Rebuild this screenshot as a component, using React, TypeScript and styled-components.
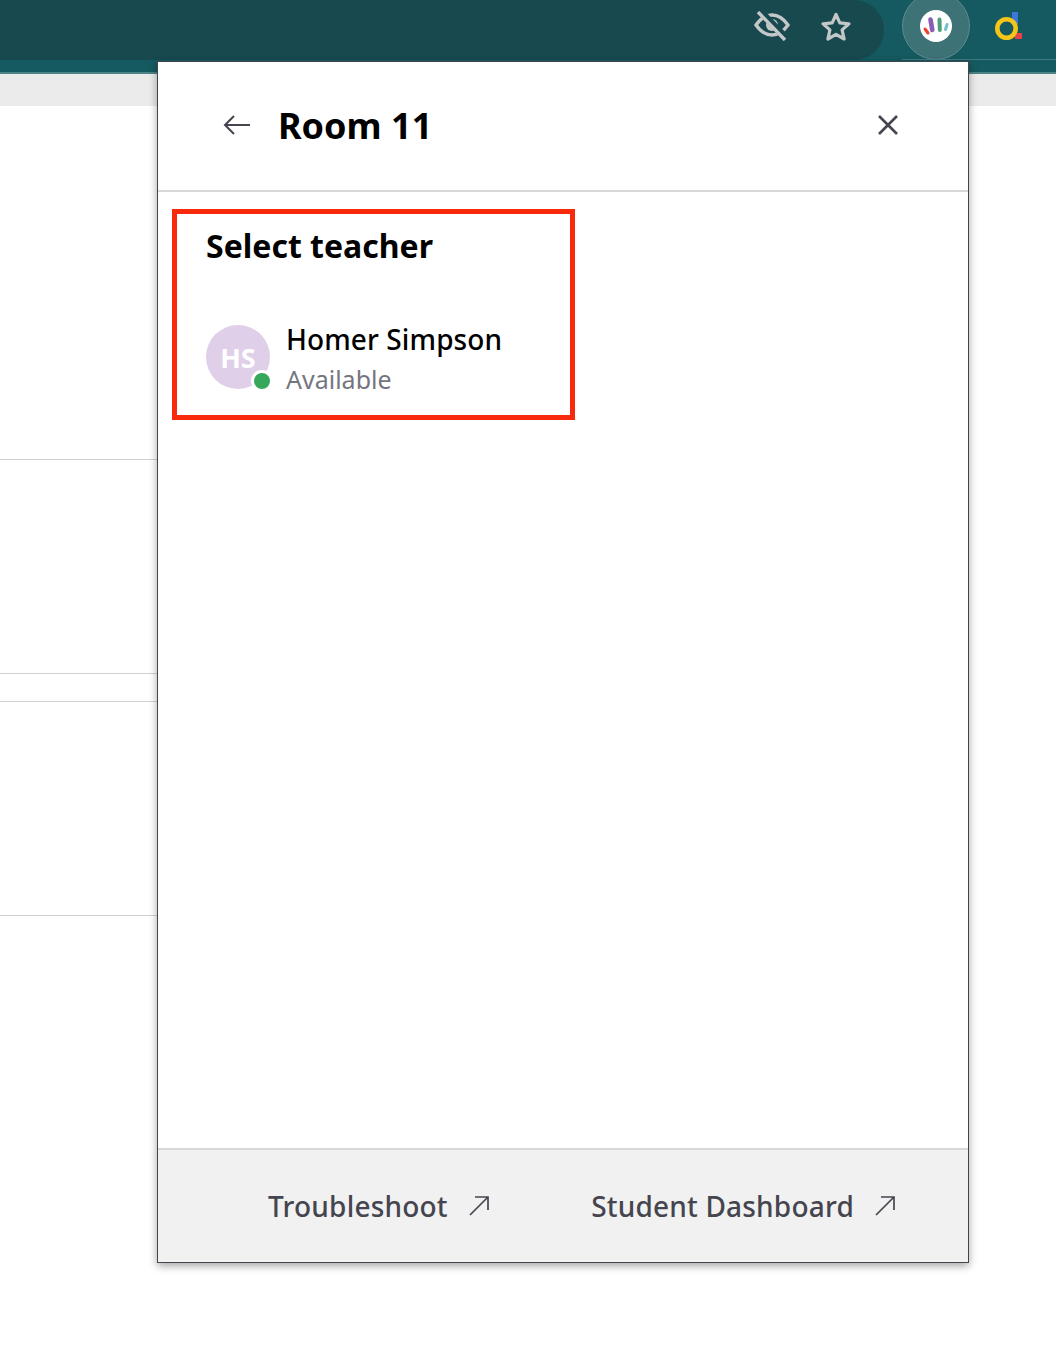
import React from "react";
import styled, { createGlobalStyle } from "styled-components";

const Global = createGlobalStyle`
  html, body { margin: 0; padding: 0; background: #fff; }
  body { font-family: "Noto Sans", "Open Sans", sans-serif; }
`;

const Page = styled.div`
  position: relative;
  width: 1056px;
  height: 1352px;
  overflow: hidden;
  background: #fff;
`;

const Toolbar = styled.header`
  position: relative;
  display: flex;
  justify-content: space-between;
  height: 72px;
  background: #155a60;
  border-bottom: 2px solid #4d8287;
`;

const Omnibox = styled.div`
  display: flex;
  justify-content: flex-end;
  align-items: center;
  gap: 31px;
  width: 884px;
  height: 60px;
  box-sizing: border-box;
  padding: 0 33px 8px 0;
  background: #17494f;
  border-radius: 0 30px 30px 0;
`;

const Extensions = styled.div`
  flex: 1;
  height: 59px;
  display: flex;
  align-items: flex-start;
  border-bottom: 1px solid #3f7a7f;
  margin-left: 18px;
  gap: 23px;
`;

const ExtensionHalo = styled.div`
  position: relative;
  display: flex;
  align-items: center;
  justify-content: center;
  flex: none;
  width: 68px;
  height: 68px;
  margin-top: -8px;
  border-radius: 50%;
  background: #3d7277;
  box-sizing: border-box;
  border: 1.5px solid #5a8c90;
`;

const ExtensionSlot = styled.div`
  display: flex;
  align-items: center;
  justify-content: center;
  width: 32px;
  height: 32px;
  margin-top: 10px;
`;

const GreyStrip = styled.div`
  height: 32px;
  background: #ebebeb;
`;

const BackgroundLines = styled.div`
  height: 900px;
`;

const Rule = styled.div<{ $top: number }>`
  height: 1px;
  width: 160px;
  margin-top: ${(p) => p.$top}px;
  background: #d0d0d0;
`;

const Panel = styled.section`
  position: absolute;
  left: 157px;
  top: 61px;
  width: 812px;
  height: 1202px;
  box-sizing: border-box;
  display: flex;
  flex-direction: column;
  background: #fff;
  border: 1px solid #40464c;
  box-shadow: 0 3px 8px rgba(0, 0, 0, 0.35);
`;

const PanelHeader = styled.div`
  display: flex;
  align-items: center;
  height: 130px;
  flex: none;
  box-sizing: border-box;
  padding: 0 70px 0 65px;
  border-bottom: 2px solid #d8d8d8;
`;

const IconButton = styled.button`
  display: flex;
  padding: 0;
  margin-bottom: 2px;
  border: 0;
  background: none;
  color: #45454f;
`;

const Title = styled.h1`
  flex: 1;
  margin: 0 0 0 27px;
  font-size: 36px;
  line-height: 48px;
  font-weight: 700;
  color: #000;
`;

const Body = styled.div`
  flex: 1;
  padding: 17px 0 0 14px;
`;

const Callout = styled.div`
  width: 403px;
  height: 211px;
  box-sizing: border-box;
  padding: 10px 0 0 29px;
  border: 5px solid #f92a0b;
`;

const SectionTitle = styled.h2`
  margin: 0;
  font-size: 32px;
  line-height: 44px;
  font-weight: 700;
  color: #000;
`;

const TeacherRow = styled.div`
  display: flex;
  align-items: flex-start;
  gap: 16px;
  margin-top: 57px;
`;

const Avatar = styled.div`
  position: relative;
  display: flex;
  align-items: center;
  justify-content: center;
  flex: none;
  width: 64px;
  height: 64px;
  border-radius: 50%;
  background: #dfcfe9;
  color: #fff;
  font-size: 27px;
  font-weight: 700;
`;

const StatusDot = styled.span`
  position: absolute;
  right: -3px;
  bottom: -3px;
  width: 16px;
  height: 16px;
  border-radius: 50%;
  background: #36a85c;
  border: 3px solid #fff;
`;

const TeacherText = styled.div`
  display: flex;
  flex-direction: column;
  margin-top: -6px;
`;

const TeacherName = styled.div`
  font-size: 28px;
  line-height: 40px;
  font-weight: 500;
  letter-spacing: 0.1px;
  color: #000;
`;

const TeacherStatus = styled.div`
  font-size: 25px;
  line-height: 40px;
  color: #757580;
`;

const Footer = styled.footer`
  display: flex;
  align-items: center;
  flex: none;
  height: 114px;
  box-sizing: border-box;
  padding: 0 73px 0 110px;
  justify-content: space-between;
  background: #f1f1f1;
  border-top: 2px solid #d8d8d8;
`;

const FooterLink = styled.a`
  display: flex;
  align-items: center;
  gap: 21px;
  font-size: 28px;
  line-height: 40px;
  font-weight: 500;
  letter-spacing: 0.2px;
  color: #45454f;
`;

const ArrowOut = () => (
  <svg width="20" height="20" viewBox="0 0 20 20" fill="none" stroke="#45454f" strokeWidth="1.7">
    <path d="M1 19 19 1M6 1h13v13" />
  </svg>
);

const App = () => (
  <>
    <Global />
    <Page>
      <Toolbar>
        <Omnibox>
          <svg width="36" height="30" viewBox="0 0 36 30" fill="none" stroke="#c3c7c8" strokeWidth="3.400">
            <path d="M2 14C7 7 12 4 18 4s11 3 16 10c-5 7-10 10-16 10S7 21 2 14Z" />
            <circle cx="18" cy="14" r="6" fill="#c3c7c8" stroke="none" />
            <path d="M6 0 34 29" stroke="#17494f" strokeWidth="7" />
            <path d="M4 1 31 29" />
          </svg>
          <svg width="30" height="29" viewBox="0 0 30 29" fill="none" stroke="#c3c7c8" strokeWidth="3.200" strokeLinejoin="round">
            <path d="M15 2.500l3.800 8.300 9.200 1-6.900 6.100 2 9.100L15 22.400l-8.100 4.600 2-9.100L2 11.800l9.200-1Z" />
          </svg>
        </Omnibox>
        <Extensions>
          <ExtensionHalo>
            <svg width="32" height="32" viewBox="0 0 32 32">
              <circle cx="16" cy="16" r="16" fill="#fff" />
              <path d="M5 19l3 4" stroke="#f0422a" strokeWidth="3" strokeLinecap="round" />
              <path d="M10.500 9.500l1.800 10.500" stroke="#8a5db5" strokeWidth="4.600" strokeLinecap="round" />
              <path d="M19.500 9.500l.3 10.500" stroke="#4f9e7c" strokeWidth="4" strokeLinecap="round" />
              <path d="M27 14.500l-1.500 5" stroke="#6fc0cb" strokeWidth="3" strokeLinecap="round" />
            </svg>
          </ExtensionHalo>
          <ExtensionSlot>
            <svg width="28" height="28" viewBox="0 0 28 28">
              <rect x="17" y="0" width="6" height="12" fill="#3b78d8" />
              <rect x="20" y="21" width="7" height="6" fill="#e8404c" />
              <circle cx="11.500" cy="16.500" r="9.200" fill="none" stroke="#f5c518" strokeWidth="4.600" />
            </svg>
          </ExtensionSlot>
        </Extensions>
      </Toolbar>
      <GreyStrip />
      <BackgroundLines>
        <Rule $top={353} />
        <Rule $top={213} />
        <Rule $top={27} />
        <Rule $top={213} />
      </BackgroundLines>
      <Panel>
        <PanelHeader>
          <IconButton aria-label="Back">
            <svg width="28" height="22" viewBox="0 0 28 22" fill="none" stroke="currentColor" strokeWidth="2">
              <path d="M27 11H2M11 2l-9 9 9 9" />
            </svg>
          </IconButton>
          <Title>Room 11</Title>
          <IconButton aria-label="Close">
            <svg width="20" height="20" viewBox="0 0 20 20" fill="none" stroke="currentColor" strokeWidth="2.600">
              <path d="M1 1l18 18M19 1 1 19" />
            </svg>
          </IconButton>
        </PanelHeader>
        <Body>
          <Callout>
            <SectionTitle>Select teacher</SectionTitle>
            <TeacherRow>
              <Avatar>
                HS
                <StatusDot />
              </Avatar>
              <TeacherText>
                <TeacherName>Homer Simpson</TeacherName>
                <TeacherStatus>Available</TeacherStatus>
              </TeacherText>
            </TeacherRow>
          </Callout>
        </Body>
        <Footer>
          <FooterLink>
            Troubleshoot
            <ArrowOut />
          </FooterLink>
          <FooterLink>
            Student Dashboard
            <ArrowOut />
          </FooterLink>
        </Footer>
      </Panel>
    </Page>
  </>
);

export default App;
